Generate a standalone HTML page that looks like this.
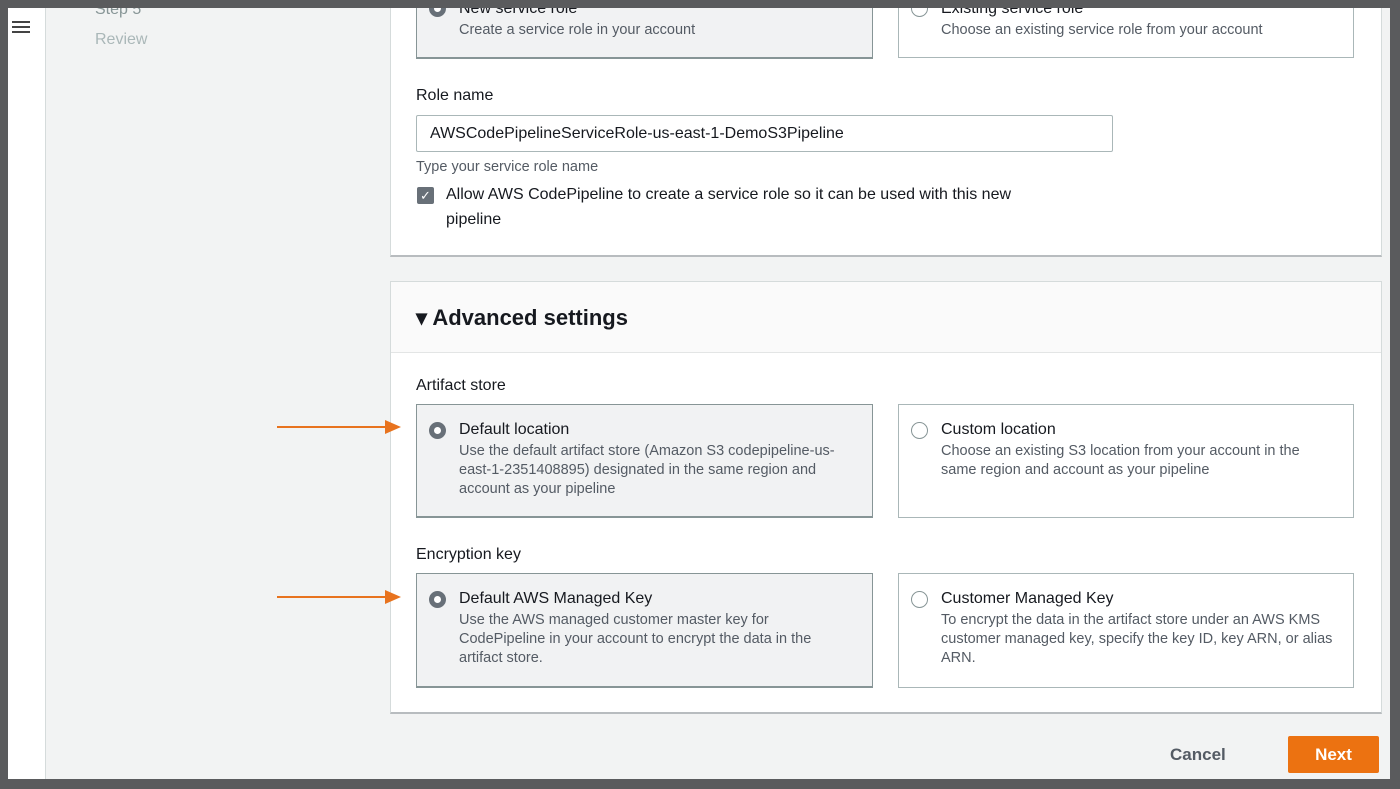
<!DOCTYPE html>
<html><head><meta charset="utf-8"><style>
*{box-sizing:border-box;margin:0;padding:0}
body{width:1400px;height:789px;overflow:hidden;background:#5a5b5d;font-family:"Liberation Sans",sans-serif;position:relative;color:#16191f}
.a{position:absolute}
.main{left:46px;top:0px;width:1344px;height:779px;background:#f2f3f3}
.strip{left:8px;top:0px;width:38px;height:779px;background:#fff;border-right:1px solid #d5dbdb}
.card{background:#fff;border:1px solid #d5dbdb;border-bottom:2px solid #b8bcbf}
.opt{border:1px solid #aab7b8;background:#fff}
.opt.sel{background:#f1f2f3;border-color:#879596;border-bottom-width:2px}
.t{font-size:16px;color:#16191f}
.d{font-size:14.5px;color:#545b64;line-height:19px}
.rad{width:17px;height:17px;border-radius:50%;border:1.5px solid #879596;background:#fff}
.rad.on{border:5px solid #687078;background:#fff}
.arrow{height:2px;background:#e8731e}
.frame{left:0;top:0;width:1400px;height:8px;background:#5a5b5d;z-index:9}
</style></head><body>
<div class="a strip"></div>
<div class="a" style="left:12px;top:21px;width:18px;height:2px;background:#444;box-shadow:0 5px 0 #444,0 10px 0 #444"></div>
<div class="a main"></div>
<div class="a" style="left:95px;top:1px;font-size:16px;color:#879596">Step 5</div>
<div class="a" style="left:95px;top:31px;font-size:16px;color:#aab7b8">Review</div>

<div class="a card" style="left:390px;top:-10px;width:992px;height:267px"></div>
<div class="a opt sel" style="left:416px;top:-10px;width:457px;height:69px"></div>
<div class="a opt" style="left:898px;top:-10px;width:456px;height:68px"></div>
<div class="a rad on" style="left:429px;top:0px"></div>
<div class="a rad" style="left:911px;top:0px"></div>
<div class="a t" style="left:459px;top:0px">New service role</div>
<div class="a t" style="left:941px;top:0px">Existing service role</div>
<div class="a d" style="left:459px;top:21px">Create a service role in your account</div>
<div class="a d" style="left:941px;top:21px">Choose an existing service role from your account</div>
<div class="a t" style="left:416px;top:87px">Role name</div>
<div class="a" style="left:416px;top:115px;width:697px;height:37px;border:1px solid #aab7b8;border-radius:2px;background:#fff;font-size:16px;padding:9px 13px">AWSCodePipelineServiceRole-us-east-1-DemoS3Pipeline</div>
<div class="a d" style="left:416px;top:158px">Type your service role name</div>
<div class="a" style="left:417px;top:187px;width:17px;height:17px;background:#687078;border-radius:2px;color:#fff;font-size:13px;text-align:center;line-height:17px">✓</div>
<div class="a t" style="left:446px;top:182px;width:600px;line-height:25px">Allow AWS CodePipeline to create a service role so it can be used with this new pipeline</div>

<div class="a card" style="left:390px;top:281px;width:992px;height:433px"></div>
<div class="a" style="left:391px;top:282px;width:990px;height:71px;background:#fafafa;border-bottom:1px solid #e3e5e5"></div>
<div class="a" style="left:416px;top:305px;font-size:22px;font-weight:bold">▾ Advanced settings</div>
<div class="a t" style="left:416px;top:377px">Artifact store</div>
<div class="a opt sel" style="left:416px;top:404px;width:457px;height:114px"></div>
<div class="a opt" style="left:898px;top:404px;width:456px;height:114px"></div>
<div class="a rad on" style="left:429px;top:422px"></div>
<div class="a rad" style="left:911px;top:422px"></div>
<div class="a t" style="left:459px;top:421px">Default location</div>
<div class="a d" style="left:459px;top:442px;width:398px">Use the default artifact store (Amazon S3 codepipeline-us-east-1-2351408895) designated in the same region and account as your pipeline</div>
<div class="a t" style="left:941px;top:421px">Custom location</div>
<div class="a d" style="left:941px;top:442px;width:385px">Choose an existing S3 location from your account in the same region and account as your pipeline</div>
<div class="a t" style="left:416px;top:546px">Encryption key</div>
<div class="a opt sel" style="left:416px;top:573px;width:457px;height:115px"></div>
<div class="a opt" style="left:898px;top:573px;width:456px;height:115px"></div>
<div class="a rad on" style="left:429px;top:591px"></div>
<div class="a rad" style="left:911px;top:591px"></div>
<div class="a t" style="left:459px;top:590px">Default AWS Managed Key</div>
<div class="a d" style="left:459px;top:611px;width:380px">Use the AWS managed customer master key for CodePipeline in your account to encrypt the data in the artifact store.</div>
<div class="a t" style="left:941px;top:590px">Customer Managed Key</div>
<div class="a d" style="left:941px;top:611px;width:405px">To encrypt the data in the artifact store under an AWS KMS customer managed key, specify the key ID, key ARN, or alias ARN.</div>

<div class="a arrow" style="left:277px;top:426px;width:110px"></div>
<div class="a" style="left:385px;top:420px;border-left:16px solid #e8731e;border-top:7px solid transparent;border-bottom:7px solid transparent"></div>
<div class="a arrow" style="left:277px;top:596px;width:110px"></div>
<div class="a" style="left:385px;top:590px;border-left:16px solid #e8731e;border-top:7px solid transparent;border-bottom:7px solid transparent"></div>

<div class="a" style="left:1170px;top:745px;font-size:17px;font-weight:bold;color:#545b64">Cancel</div>
<div class="a" style="left:1288px;top:736px;width:91px;height:37px;background:#ec7211;border-radius:2px;color:#fff;font-size:17px;font-weight:bold;text-align:center;line-height:37px">Next</div>
<div class="a frame"></div>
</body></html>
